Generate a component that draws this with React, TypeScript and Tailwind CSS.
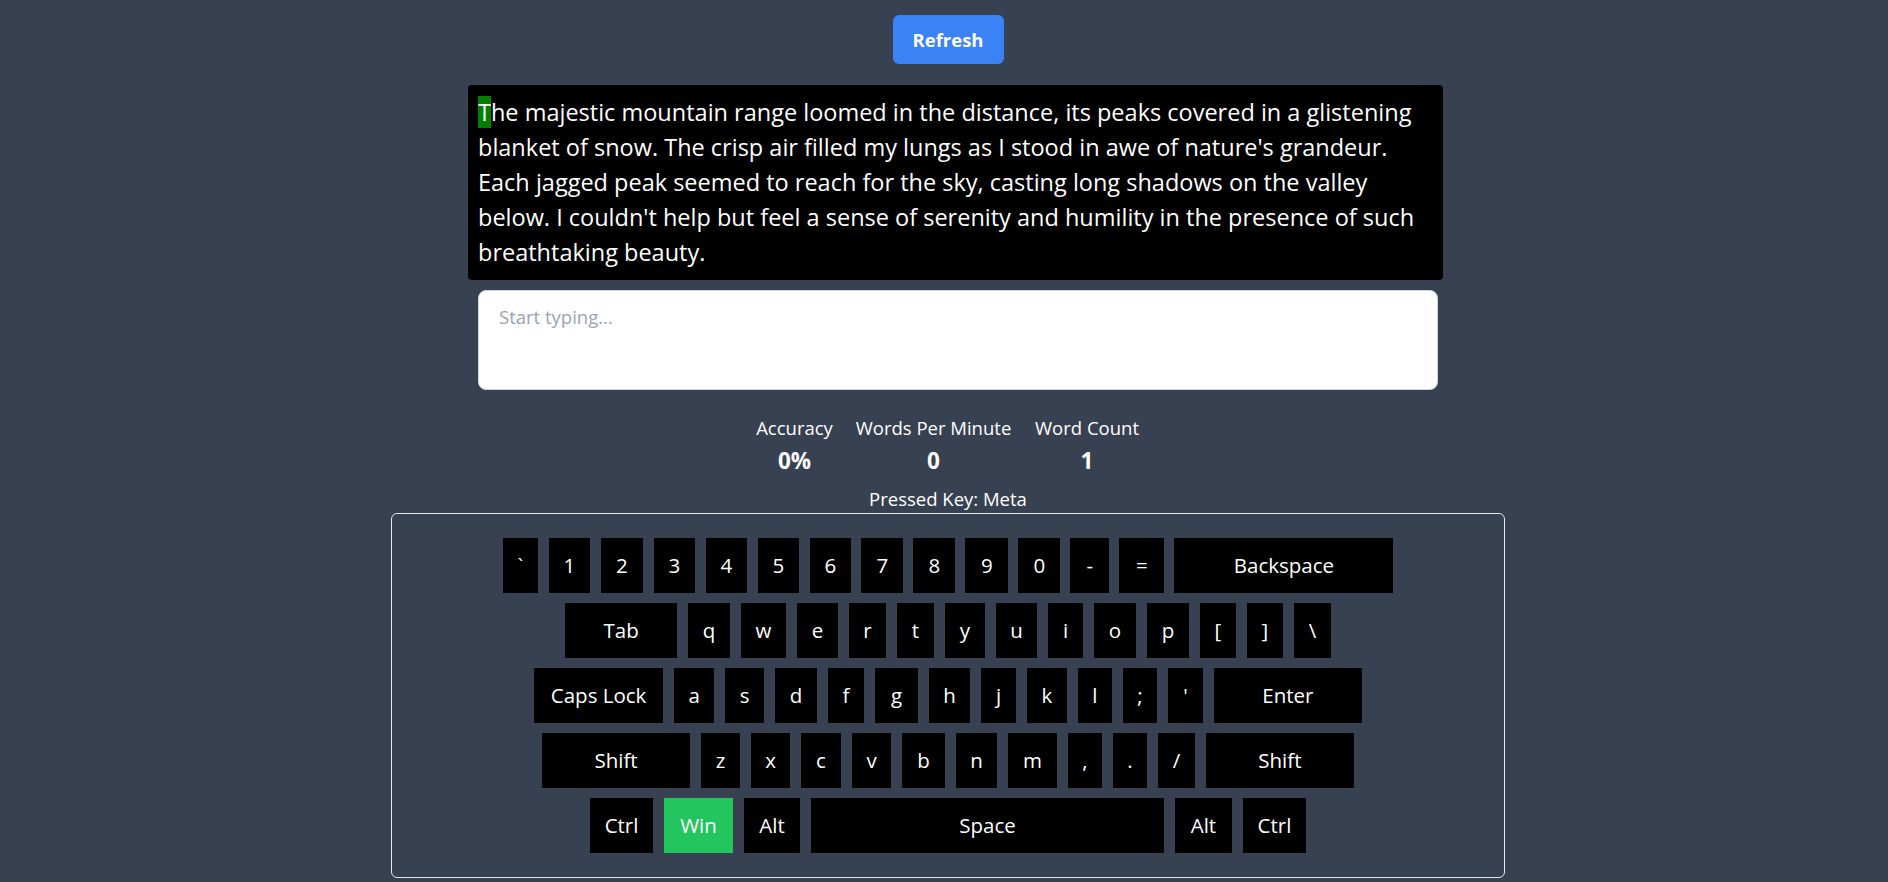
import { useState } from 'react';

type Key = { label: string; w: string; active?: boolean };

const rows: Key[][] = [
  [
    { label: '`', w: 'w-[35.7px]' },
    { label: '1', w: 'w-[41.7px]' },
    { label: '2', w: 'w-[42.7px]' },
    { label: '3', w: 'w-[41.7px]' },
    { label: '4', w: 'w-[41.7px]' },
    { label: '5', w: 'w-[41.7px]' },
    { label: '6', w: 'w-[41.7px]' },
    { label: '7', w: 'w-[41.7px]' },
    { label: '8', w: 'w-[41.7px]' },
    { label: '9', w: 'w-[42.7px]' },
    { label: '0', w: 'w-[41.7px]' },
    { label: '-', w: 'w-[38.7px]' },
    { label: '=', w: 'w-[44.7px]' },
    { label: 'Backspace', w: 'w-[219px]' },
  ],
  [
    { label: 'Tab', w: 'w-[112.7px]' },
    { label: 'q', w: 'w-[42.7px]' },
    { label: 'w', w: 'w-[45.7px]' },
    { label: 'e', w: 'w-[41.7px]' },
    { label: 'r', w: 'w-[37.7px]' },
    { label: 't', w: 'w-[37.7px]' },
    { label: 'y', w: 'w-[40.7px]' },
    { label: 'u', w: 'w-[41.7px]' },
    { label: 'i', w: 'w-[35.7px]' },
    { label: 'o', w: 'w-[42.7px]' },
    { label: 'p', w: 'w-[42.7px]' },
    { label: '[', w: 'w-[36.7px]' },
    { label: ']', w: 'w-[36.7px]' },
    { label: '\\', w: 'w-[37.7px]' },
  ],
  [
    { label: 'Caps Lock', w: 'w-[129.7px]' },
    { label: 'a', w: 'w-[40.7px]' },
    { label: 's', w: 'w-[39.7px]' },
    { label: 'd', w: 'w-[42.7px]' },
    { label: 'f', w: 'w-[36.7px]' },
    { label: 'g', w: 'w-[43.7px]' },
    { label: 'h', w: 'w-[41.7px]' },
    { label: 'j', w: 'w-[35.7px]' },
    { label: 'k', w: 'w-[40.7px]' },
    { label: 'l', w: 'w-[34.7px]' },
    { label: ';', w: 'w-[34.7px]' },
    { label: "'", w: 'w-[35.7px]' },
    { label: 'Enter', w: 'w-[148.7px]' },
  ],
  [
    { label: 'Shift', w: 'w-[148.7px]' },
    { label: 'z', w: 'w-[39.7px]' },
    { label: 'x', w: 'w-[39.7px]' },
    { label: 'c', w: 'w-[40.7px]' },
    { label: 'v', w: 'w-[39.7px]' },
    { label: 'b', w: 'w-[43.7px]' },
    { label: 'n', w: 'w-[41.7px]' },
    { label: 'm', w: 'w-[49.7px]' },
    { label: ',', w: 'w-[34.7px]' },
    { label: '.', w: 'w-[34.7px]' },
    { label: '/', w: 'w-[37.7px]' },
    { label: 'Shift', w: 'w-[148.7px]' },
  ],
  [
    { label: 'Ctrl', w: 'w-[63.7px]' },
    { label: 'Win', w: 'w-[69.7px]', active: true },
    { label: 'Alt', w: 'w-[56.7px]' },
    { label: 'Space', w: 'w-[353.7px]' },
    { label: 'Alt', w: 'w-[57.7px]' },
    { label: 'Ctrl', w: 'w-[63.7px]' },
  ],
];

const text =
  "The majestic mountain range loomed in the distance, its peaks covered in a glistening blanket of snow. The crisp air filled my lungs as I stood in awe of nature's grandeur. Each jagged peak seemed to reach for the sky, casting long shadows on the valley below. I couldn't help but feel a sense of serenity and humility in the presence of such breathtaking beauty.";

const stats = [
  { label: 'Accuracy', value: '0%', w: 'w-[77px]' },
  { label: 'Words Per Minute', value: '0', w: 'w-[157px]' },
  { label: 'Word Count', value: '1', w: 'w-[106px]' },
];

export default function App() {
  const [typed, setTyped] = useState('');

  return (
    <div className="min-h-screen bg-[#374151] pl-2 font-['Open_Sans',sans-serif] text-white">
      <div className="flex flex-col items-center pt-[15px]">
        <button className="h-[49px] w-[111px] rounded-md bg-[#3b82f6] text-[18.5px] font-bold">
          Refresh
        </button>

        <div className="mt-[21px] ml-[15px] w-[975px] rounded bg-black p-2.5 text-[23.5px] leading-[35px]">
          <span className="bg-[green]">{text[0]}</span>
          {text.slice(1)}
        </div>

        <textarea
          value={typed}
          onChange={(e) => setTyped(e.target.value)}
          placeholder="Start typing..."
          className="mt-2.5 ml-5 h-[100px] w-[960px] resize-none rounded-lg border border-[#d1d5db] bg-white px-5 pt-3 text-[18.5px] leading-7 text-black outline-none placeholder:text-[#9ca3af]"
        />

        <div className="mt-6 flex gap-[22px]">
          {stats.map((s) => (
            <div key={s.label} className={`flex flex-col items-center ${s.w}`}>
              <span className="whitespace-nowrap text-[18.5px] leading-7">{s.label}</span>
              <span className="mt-[3px] text-[22.5px] font-bold leading-8">{s.value}</span>
            </div>
          ))}
        </div>

        <p className="mt-2 text-[18.5px] leading-7">Pressed Key: Meta</p>

        <div className="flex w-[1114px] flex-col items-center gap-2.5 rounded-md border border-[#e5e7eb] py-6">
          {rows.map((row, i) => (
            <div key={i} className="flex gap-[10.3px]">
              {row.map((k, j) => (
                <div
                  key={j}
                  className={`flex h-[55px] items-center justify-center text-[20.5px] ${k.w} ${
                    k.active ? 'bg-[#22c55e]' : 'bg-black'
                  }`}
                >
                  {k.label}
                </div>
              ))}
            </div>
          ))}
        </div>
      </div>
    </div>
  );
}
